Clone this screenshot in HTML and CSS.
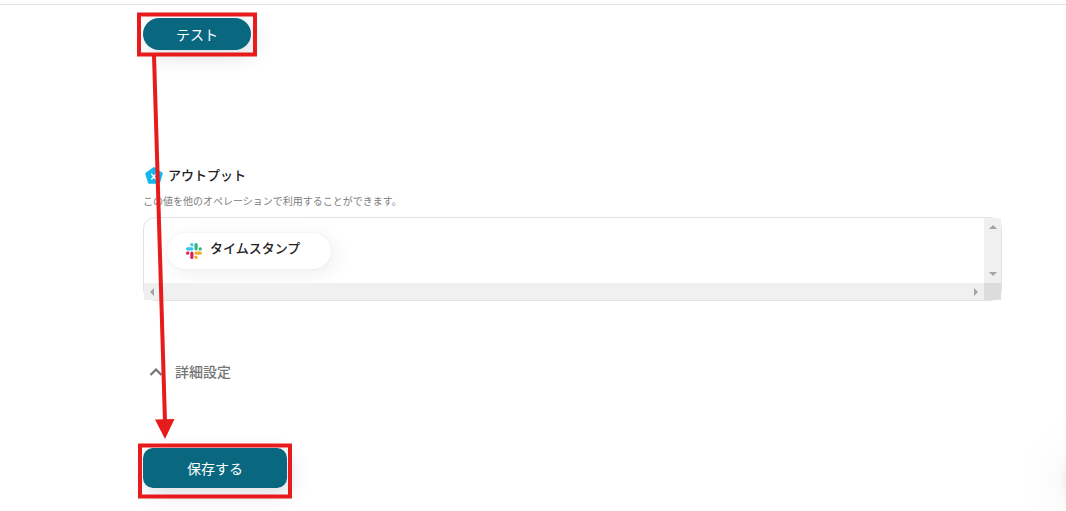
FILE: index.html
```html
<!DOCTYPE html>
<html lang="ja">
<head>
<meta charset="utf-8">
<meta name="viewport" content="width=device-width, initial-scale=1">
<title>アウトプット</title>
<link rel="stylesheet" href="styles.css">
</head>
<body>
<main class="page">
  <button class="btn btn-test" type="button">テスト</button>

  <section class="output">
    <h2 class="output-title">
      <svg class="pentagon" viewBox="0 0 18 18" aria-hidden="true">
        <path d="M9 2 16.800 7.500 14 16.800H4L1.200 7.500Z" fill="#13b9ea" stroke="#13b9ea" stroke-width="2" stroke-linejoin="round"/>
        <path d="M6 8c2 0 3 5 5.500 5M11.500 8c-2 0-3 5-5.500 5" fill="none" stroke="#fff" stroke-width="1.500"/>
      </svg>
      アウトプット
    </h2>
    <p class="output-note">この値を他のオペレーションで利用することができます。</p>
    <div class="box">
      <div class="box-body">
        <div class="chip">
          <svg class="slack" viewBox="0 0 54 54" aria-hidden="true">
            <path fill="#36c5f0" d="M19.700 0a5.400 5.400 0 1 0 0 10.800h5.400V5.400A5.400 5.400 0 0 0 19.700 0m0 14.400H5.400a5.400 5.400 0 1 0 0 10.800h14.300a5.400 5.400 0 0 0 0-10.800"/>
            <path fill="#2eb67d" d="M53.800 19.800a5.400 5.400 0 1 0-10.800 0v5.400h5.400a5.400 5.400 0 0 0 5.400-5.400m-14.400 0V5.400a5.400 5.400 0 1 0-10.800 0v14.400a5.400 5.400 0 1 0 10.800 0"/>
            <path fill="#ecb22e" d="M34 54a5.400 5.400 0 1 0 0-10.800h-5.400v5.400A5.400 5.400 0 0 0 34 54m0-14.400h14.400a5.400 5.400 0 1 0 0-10.800H34a5.400 5.400 0 0 0 0 10.800"/>
            <path fill="#e01e5a" d="M0 34.200a5.400 5.400 0 1 0 10.800 0v-5.400H5.400A5.400 5.400 0 0 0 0 34.200m14.400 0v14.400a5.400 5.400 0 1 0 10.800 0V34.200a5.400 5.400 0 1 0-10.800 0"/>
          </svg>
          <span>タイムスタンプ</span>
        </div>
      </div>
      <div class="bar bar-y">
        <svg class="tri" viewBox="0 0 8 8" aria-hidden="true"><path d="M0 6 4 2 8 6Z"/></svg>
        <svg class="tri" viewBox="0 0 8 8" aria-hidden="true"><path d="M0 2 4 6 8 2Z"/></svg>
      </div>
      <div class="bar bar-x">
        <svg class="tri" viewBox="0 0 8 8" aria-hidden="true"><path d="M6 0 2 4 6 8Z"/></svg>
        <svg class="tri" viewBox="0 0 8 8" aria-hidden="true"><path d="M2 0 6 4 2 8Z"/></svg>
      </div>
      <div class="bar-corner"></div>
    </div>
  </section>

  <button class="details" type="button">
    <svg class="chevron" viewBox="0 0 14 10" aria-hidden="true"><path d="M1.500 9 7 3.500 12.500 9" fill="none" stroke="#757575" stroke-width="2.200"/></svg>
    詳細設定
  </button>

  <button class="btn btn-save" type="button">保存する</button>
</main>

<div class="glow"><div class="glow-disc"></div></div>

<svg class="marks" width="300" height="511" viewBox="0 0 300 511" aria-hidden="true">
  <g fill="none" stroke="#e71a1c" stroke-width="4">
    <rect x="139" y="14.500" width="116" height="40"/>
    <rect x="140" y="445.500" width="150" height="51"/>
    <path d="M154 55 165 422"/>
  </g>
  <path d="M155 419.500 174.500 419 165 439Z" fill="#e71a1c"/>
</svg>
</body>
</html>
```
FILE: styles.css
```css
* {
  box-sizing: border-box;
}

body {
  margin: 0;
  background: #fff;
  color: #222;
  font-family: "Noto Sans CJK JP", "Noto Sans", sans-serif;
  font-size: 14px;
}

.page {
  display: flex;
  flex-direction: column;
  align-items: flex-start;
  margin-top: 4px;
  padding: 13px 64px 23px 143px;
  border-top: 1px solid #e2e2e2;
}

.btn {
  padding: 0;
  border: 0;
  background: #0a6780;
  color: #fff;
  font: inherit;
  line-height: 20px;
  box-shadow: 4px 6px 20px rgba(30, 50, 90, 0.16);
}

.btn-test {
  width: 108px;
  height: 32px;
  border-radius: 16px;
}

.btn-save {
  width: 144px;
  height: 40px;
  border-radius: 10px;
}

.output {
  align-self: stretch;
  margin-top: 114px;
}

.output-title {
  display: flex;
  align-items: center;
  gap: 5px;
  margin: 0;
  padding-left: 2px;
  font-size: 13px;
  font-weight: 500;
  line-height: 22px;
}

.pentagon {
  width: 18px;
  height: 18px;
  overflow: visible;
}

.output-note {
  margin: 6px 0 8px;
  color: #808080;
  font-size: 10px;
  line-height: 17px;
}

.box {
  display: grid;
  grid-template-columns: 1fr 17px;
  grid-template-rows: auto 17px;
  border: 1px solid #e2e2e2;
  border-radius: 12px;
}

.box-body {
  padding: 15px 23px 14px;
}

.chip {
  display: inline-flex;
  align-items: center;
  gap: 8px;
  width: 164px;
  height: 36px;
  padding: 0 19px;
  border-radius: 18px;
  background: #fff;
  font-size: 13px;
  font-weight: 500;
  line-height: 20px;
  box-shadow: 0 0 2px rgba(0, 0, 0, 0.08), 4px 4px 20px rgba(0, 0, 0, 0.07);
  vertical-align: top;
}

.chip span {
  padding-bottom: 6px;
  white-space: nowrap;
}

.slack {
  width: 16px;
  height: 16px;
}

.bar {
  display: flex;
  align-items: center;
  justify-content: space-between;
  background: #f0f0f0;
}

.bar-y {
  flex-direction: column;
  padding: 5px 0;
}

.bar-x {
  padding: 0 4px;
}

.bar-corner {
  background: #dcdcdc;
}

.tri {
  width: 8px;
  height: 8px;
  fill: #a3a3a3;
}

.details {
  display: flex;
  align-items: center;
  gap: 12px;
  margin: 60px 0 67px;
  padding: 0 6px;
  border: 0;
  background: none;
  color: #757575;
  font: inherit;
  font-weight: 500;
  line-height: 20px;
}

.chevron {
  width: 14px;
  height: 10px;
}

.marks {
  position: absolute;
  top: 0;
  left: 0;
  pointer-events: none;
}

.glow {
  position: absolute;
  right: 0;
  bottom: 0;
  width: 70px;
  height: 120px;
  overflow: hidden;
  pointer-events: none;
}

.glow-disc {
  position: absolute;
  left: 70px;
  top: 66px;
  width: 48px;
  height: 48px;
  border-radius: 24px;
  box-shadow: 0 0 60px rgba(0, 0, 0, 0.1), 0 0 12px rgba(0, 0, 0, 0.08);
}
```
